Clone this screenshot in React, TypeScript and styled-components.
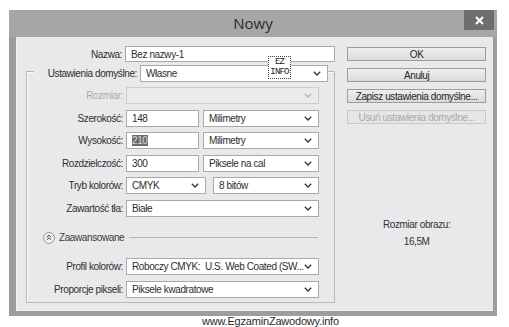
import React from 'react';
import styled, { createGlobalStyle } from 'styled-components';

const GlobalStyle = createGlobalStyle`
  html, body {
    margin: 0;
    padding: 0;
    background: #fff;
  }
  body {
    font-family: "Liberation Sans", Arial, sans-serif;
    font-size: 10px;
    letter-spacing: -0.4px;
    color: #2e2e2e;
  }
`;

const Page = styled.div`
  width: 509px;
  height: 327px;
  box-sizing: border-box;
  padding: 10px 12px 0 9px;
  overflow: hidden;
`;

const Window = styled.div`
  display: flex;
  flex-direction: column;
  background: #a1a1a1;
`;

const TitleBar = styled.div`
  position: relative;
  height: 27px;
  display: flex;
  align-items: center;
  justify-content: center;
  background: #a6a6a6;
`;

const Title = styled.div`
  font-family: "Open Sans", "Liberation Sans", sans-serif;
  font-size: 15px;
  letter-spacing: 0;
  color: #2a2a2a;
  margin-top: -1px;
`;

const CloseButton = styled.div`
  position: absolute;
  top: 0;
  right: 3px;
  width: 30px;
  height: 20px;
  background: #6e6e6e;
  color: #fff;
  display: flex;
  align-items: center;
  justify-content: center;
`;

const Frame = styled.div`
  padding: 0 4px 5px 7px;
  background: #9d9d9d;
`;

const Content = styled.div`
  position: relative;
  height: 274px;
  box-sizing: border-box;
  display: flex;
  padding: 9px 7px 0 9px;
  background: #e9e9eb;
  border: 1px solid #f3f3f3;
  border-width: 0 0 1px 1px;
`;

const LeftCol = styled.div`
  width: 310px;
  display: flex;
  flex-direction: column;
`;

const RightCol = styled.div`
  width: 139px;
  margin-left: 12px;
  display: flex;
  flex-direction: column;
  padding-top: 1px;
`;

const Row = styled.div<{ $top?: number }>`
  display: grid;
  grid-template-columns: 96px 1fr;
  column-gap: 3px;
  align-items: center;
  margin-top: ${(p) => p.$top ?? 0}px;
`;

const GroupRow = styled(Row)`
  grid-template-columns: 96px 193px;
`;

const Label = styled.div<{ $disabled?: boolean }>`
  text-align: right;
  white-space: nowrap;
  color: ${(p) => (p.$disabled ? '#ababab' : '#2e2e2e')};
`;

const Field = styled.div<{ $h?: number; $disabled?: boolean }>`
  height: ${(p) => p.$h ?? 17}px;
  box-sizing: border-box;
  display: flex;
  align-items: center;
  justify-content: space-between;
  padding: 0 6px 0 5px;
  background: ${(p) => (p.$disabled ? '#ebebeb' : '#fff')};
  border: 1px solid ${(p) => (p.$disabled ? '#cdcdcd' : '#a9a9a9')};
  white-space: pre;
  overflow: hidden;
`;

const Pair = styled.div<{ $cols: string; $gap: number }>`
  display: grid;
  grid-template-columns: ${(p) => p.$cols};
  column-gap: ${(p) => p.$gap}px;
`;

const Selected = styled.span`
  background: #6c6c6c;
  color: #d6d6d6;
`;

const Group = styled.div`
  margin-top: 9px;
  width: 309px;
  box-sizing: border-box;
  border: 1px solid #b8b8b8;
  box-shadow: inset 1px 1px 0 #fafafa;
  padding-bottom: 4px;
`;

const Legend = styled.div`
  display: flex;
  margin-top: -7px;
  padding-left: 7px;
`;

const LegendLabel = styled.div`
  width: 106px;
  box-sizing: border-box;
  padding-right: 3px;
  background: #e9e9eb;
  text-align: right;
  display: flex;
  align-items: center;
  justify-content: flex-end;
`;

const Advanced = styled.div`
  display: flex;
  align-items: center;
  margin: 15px 0 14px 16px;
`;

const AdvancedText = styled.span`
  margin-left: 4px;
  color: #3a3a3a;
`;

const Rule = styled.div`
  width: 189px;
  height: 1px;
  margin-left: 5px;
  background: #b4b4b4;
`;

const Button = styled.div<{ $disabled?: boolean }>`
  height: 14px;
  box-sizing: border-box;
  margin-bottom: 7px;
  display: flex;
  align-items: center;
  justify-content: center;
  background: ${(p) => (p.$disabled ? '#e6e6e8' : 'linear-gradient(#efefef, #dadada)')};
  border: 1px solid ${(p) => (p.$disabled ? '#c8c8c8' : '#9c9c9c')};
  color: ${(p) => (p.$disabled ? '#a9a9a9' : '#262626')};
  white-space: nowrap;
`;

const Info = styled.div`
  margin-top: 85px;
  text-align: center;
  line-height: 17px;
  color: #333;
`;

const Stamp = styled.div`
  position: absolute;
  left: 251px;
  top: 19px;
  width: 23px;
  height: 23px;
  box-sizing: border-box;
  border: 1px dotted #444;
  background: #fff;
  font-family: "Liberation Mono", monospace;
  font-size: 9px;
  letter-spacing: -0.8px;
  line-height: 10px;
  text-align: center;
  color: #222;
`;

const Watermark = styled.div`
  padding-left: 193px;
  font-size: 11px;
  letter-spacing: -0.2px;
  line-height: 11px;
  color: #2a2a2a;
`;

function Chevron({ light }: { light?: boolean }) {
  return (
    <svg width="8" height="5" viewBox="0 0 8 5">
      <path d="M0.8 0.8 L4 4 L7.2 0.8" fill="none" stroke={light ? '#b5b5b5' : '#333'} strokeWidth="1.3" />
    </svg>
  );
}

function Select({ value, disabled }: { value: string; disabled?: boolean }) {
  return (
    <Field $disabled={disabled}>
      <span>{value}</span>
      <Chevron light={disabled} />
    </Field>
  );
}

function CollapseIcon() {
  return (
    <svg width="12" height="12" viewBox="0 0 12 12">
      <circle cx="6" cy="6" r="5.4" fill="#f6f6f6" stroke="#8a8a8a" strokeWidth="0.9" />
      <path d="M3.8 5.2 L6 3.2 L8.2 5.2 M3.8 7.8 L6 5.8 L8.2 7.8" fill="none" stroke="#333" strokeWidth="1" />
    </svg>
  );
}

export default function App() {
  return (
    <>
      <GlobalStyle />
      <Page>
        <Window>
          <TitleBar>
            <Title>Nowy</Title>
            <CloseButton>
              <svg width="9" height="9" viewBox="0 0 9 9">
                <path d="M1 1 L8 8 M8 1 L1 8" stroke="#fff" strokeWidth="2" />
              </svg>
            </CloseButton>
          </TitleBar>
          <Frame>
            <Content>
              <LeftCol>
                <Row>
                  <Label>Nazwa:</Label>
                  <Field $h={16}>Bez nazwy-1</Field>
                </Row>
                <Group>
                  <Legend>
                    <LegendLabel>Ustawienia domyślne:</LegendLabel>
                    <div style={{ width: 188 }}>
                      <Select value="Własne" />
                    </div>
                  </Legend>
                  <GroupRow $top={5}>
                    <Label $disabled>Rozmiar:</Label>
                    <Select value="" disabled />
                  </GroupRow>
                  <GroupRow $top={5.5}>
                    <Label>Szerokość:</Label>
                    <Pair $cols="73px 1fr" $gap={4}>
                      <Field>148</Field>
                      <Select value="Milimetry" />
                    </Pair>
                  </GroupRow>
                  <GroupRow $top={5.5}>
                    <Label>Wysokość:</Label>
                    <Pair $cols="73px 1fr" $gap={4}>
                      <Field><Selected>210</Selected></Field>
                      <Select value="Milimetry" />
                    </Pair>
                  </GroupRow>
                  <GroupRow $top={5.5}>
                    <Label>Rozdzielczość:</Label>
                    <Pair $cols="73px 1fr" $gap={4}>
                      <Field>300</Field>
                      <Select value="Piksele na cal" />
                    </Pair>
                  </GroupRow>
                  <GroupRow $top={5.5}>
                    <Label>Tryb kolorów:</Label>
                    <Pair $cols="80px 1fr" $gap={7}>
                      <Select value="CMYK" />
                      <Select value="8 bitów" />
                    </Pair>
                  </GroupRow>
                  <GroupRow $top={5.5}>
                    <Label>Zawartość tła:</Label>
                    <Select value="Białe" />
                  </GroupRow>
                  <Advanced>
                    <CollapseIcon />
                    <AdvancedText>Zaawansowane</AdvancedText>
                    <Rule />
                  </Advanced>
                  <GroupRow>
                    <Label>Profil kolorów:</Label>
                    <Select value="Roboczy CMYK:  U.S. Web Coated (SW..." />
                  </GroupRow>
                  <GroupRow $top={6}>
                    <Label>Proporcje pikseli:</Label>
                    <Select value="Piksele kwadratowe" />
                  </GroupRow>
                </Group>
              </LeftCol>
              <RightCol>
                <Button>OK</Button>
                <Button>Anuluj</Button>
                <Button>Zapisz ustawienia domyślne...</Button>
                <Button $disabled>Usuń ustawienia domyślne...</Button>
                <Info>
                  Rozmiar obrazu:
                  <br />
                  16,5M
                </Info>
              </RightCol>
              <Stamp>
                EZ
                <br />
                INFO
              </Stamp>
            </Content>
          </Frame>
        </Window>
        <Watermark>www.EgzaminZawodowy.info</Watermark>
      </Page>
    </>
  );
}
